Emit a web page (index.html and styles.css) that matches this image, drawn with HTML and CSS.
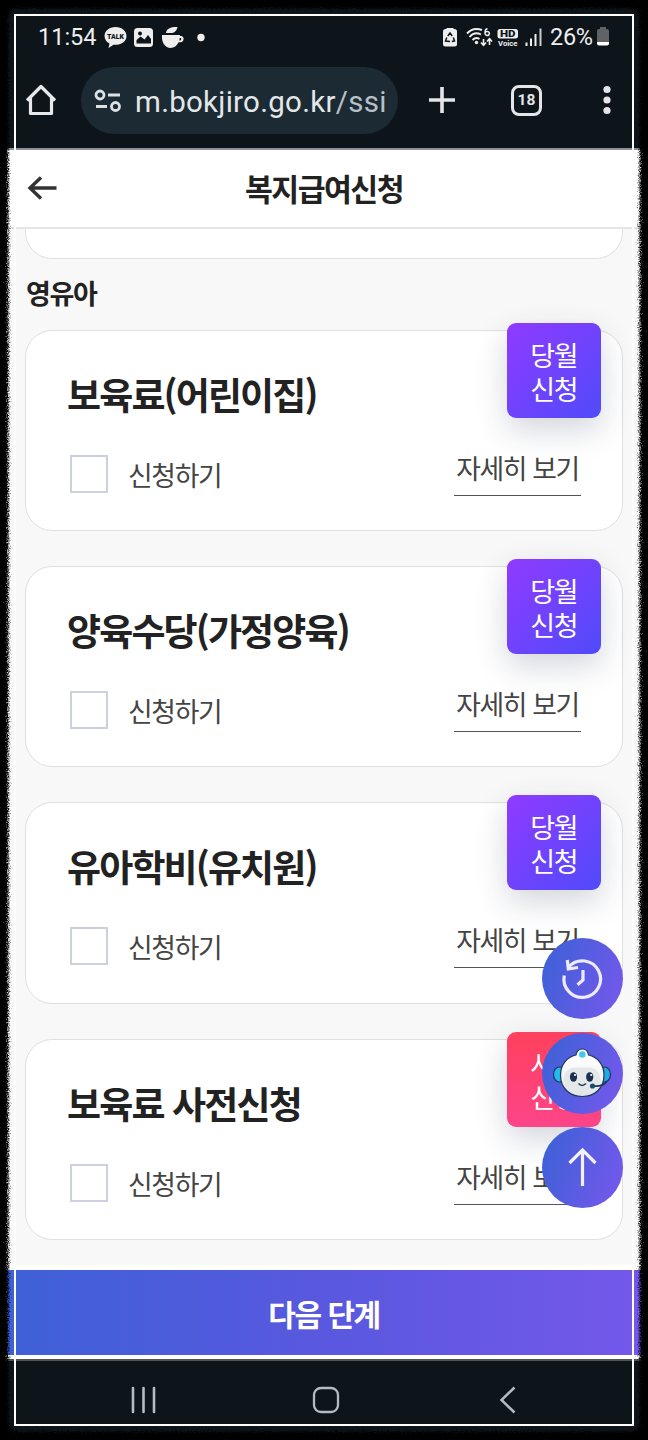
FILE: index.html
```html
<!DOCTYPE html>
<html lang="ko">
<head>
<meta charset="utf-8">
<title>복지급여신청</title>
<link rel="stylesheet" href="styles.css">
</head>
<body>
<div class="screen">
  <div class="status">
    <span class="clock">11:54</span>
    <svg class="status-left" width="104" height="26" viewBox="104 24 104 26">
      <path d="M115.500 27c-6.500 0-11 4-11 9 0 3.300 2 6 5 7.500l-1 4.500 5-3.200c7 .6 13-3 13-8.800 0-5-4.500-9-11-9z" fill="#eee"/>
      <text x="107" y="39" class="talk" textLength="17" lengthAdjust="spacingAndGlyphs">TALK</text>
      <rect x="134" y="28" width="19" height="19" rx="3.500" fill="#eee"/>
      <circle cx="140" cy="33.500" r="2" fill="#0d141a"/>
      <path d="M136.500 43.500v-3.500l4-3.500 4 3 3.500-4.500 3 4v4.500z" fill="#0d141a"/>
      <path d="M162 35h18v1c4.800-1.200 5.300 7-1.300 6.300-1.700 3.500-4.700 5.700-8 5.700-5.500 0-9.500-6-8.700-13zM166 33c.5-4 4-6.500 11.500-6-1 4-3 6-7 6z" fill="#eee"/>
      <path d="M179.700 38c2.300-.5 2 2.500-.3 2.500z" fill="#0d141a"/>
      <circle cx="201" cy="37.500" r="3.700" fill="#eee"/>
    </svg>
    <svg class="status-right" width="101" height="24" viewBox="442 26 101 24">
      <rect x="443" y="29" width="14" height="17.500" rx="2.500" fill="#eee"/><path d="M446.500 28h7v2h-7z" fill="#eee"/>
      <path d="M447.800 36l2.200-3 2.200 3M453.300 37.500l1.200 3.500-2.700.5M450 41.500l-4.500-.5 1.300-3.500" stroke="#0d141a" stroke-width="1.500" fill="none"/>
      <g fill="none" stroke="#eee" stroke-width="1.900"><path d="M467 33.500c4-4.500 9.500-5.500 15-3.500M469.500 37c3-3.500 7.500-4.500 11.500-2.500M472.500 40c2-2 4.500-2.500 7-1"/><path d="M483.500 39v6M481 42.500l2.500 2.800 2.500-2.800M489.500 45v-6M487 41.500l2.500-2.800 2.500 2.800" stroke-width="1.600"/><path d="M487.500 28.800c-3 0-3.500 6.700-.5 6.700 3.300 0 3-4.200 0-4-1 0-1.800.8-2 1.500" stroke-width="1.500"/></g>
      <circle cx="476.500" cy="42.500" r="1.700" fill="#eee"/>
      <rect x="497.500" y="29" width="20.500" height="9.500" rx="2.500" fill="#eee"/>
      <text x="500" y="37" class="hd" textLength="15.500" lengthAdjust="spacingAndGlyphs">HD</text>
      <text x="498" y="45.500" class="voice" textLength="19.500" lengthAdjust="spacingAndGlyphs">Voice</text>
      <path d="M526.500 42.500v3.500M531 38.500v7.500M535.500 34v12" stroke="#eee" stroke-width="2"/><path d="M540.500 28.500v17.500" stroke="#ccc" stroke-width="2"/>
    </svg>
    <span class="percent">26%</span>
    <svg class="battery" width="14" height="20" viewBox="0 0 14 20"><path d="M4 0h6v2h1q2 0 2 2v11H1V4q0-2 2-2h1z" fill="#606266"/><path d="M1 15h12v1.500q0 2-2 2H3q-2 0-2-2z" fill="#fff"/></svg>
  </div>
  <div class="browser">
    <svg class="home" width="34" height="34" viewBox="0 0 34 34"><path d="M3 17.500 17 3.500l14 14M6.500 15v15.500h21V15" fill="none" stroke="#e6e8ea" stroke-width="3.200" stroke-linejoin="round"/></svg>
    <div class="url">
      <svg width="28" height="24" viewBox="0 0 28 24" fill="none" stroke="#dce1e4" stroke-width="2.800"><circle cx="6" cy="6" r="4"/><path d="M14 6h12M2 17.500h11"/><circle cx="21.500" cy="17.500" r="4"/></svg>
      <span class="address">m.bokjiro.go.kr<span class="path">/ssi</span></span>
    </div>
    <svg class="plus" width="28" height="28" viewBox="0 0 28 28"><path d="M14 1v26M1 14h26" stroke="#e4e5e8" stroke-width="3.600"/></svg>
    <div class="tabs">18</div>
    <svg class="more" width="8" height="30" viewBox="0 0 8 30" fill="#e4e5e8"><circle cx="4" cy="4.500" r="3.600"/><circle cx="4" cy="15" r="3.600"/><circle cx="4" cy="25.500" r="3.600"/></svg>
  </div>
  <header class="header">
    <svg class="back" width="32" height="26" viewBox="0 0 32 26"><path d="M30.500 13H4M15 2.500 4 13l11 10.500" fill="none" stroke="#333" stroke-width="3.400"/></svg>
    <h1 class="page-title">복지급여신청</h1>
  </header>
  <main class="content">
    <div class="previous"></div>
    <h2 class="section">영유아</h2>
    <div class="cards">
      <article class="card"><h3 class="name">보육료(어린이집)</h3><div class="row"><span class="box"></span><span class="apply">신청하기</span><span class="detail">자세히 보기</span></div><div class="badge">당월<br>신청</div></article>
      <article class="card"><h3 class="name">양육수당(가정양육)</h3><div class="row"><span class="box"></span><span class="apply">신청하기</span><span class="detail">자세히 보기</span></div><div class="badge">당월<br>신청</div></article>
      <article class="card"><h3 class="name">유아학비(유치원)</h3><div class="row"><span class="box"></span><span class="apply">신청하기</span><span class="detail">자세히 보기</span></div><div class="badge">당월<br>신청</div></article>
      <article class="card"><h3 class="name">보육료 사전신청</h3><div class="row"><span class="box"></span><span class="apply">신청하기</span><span class="detail">자세히 보기</span></div><div class="badge pink">사전<br>신청</div></article>
    </div>
  </main>
  <button class="next">다음 단계</button>
  <nav class="nav">
    <svg width="28" height="28" viewBox="0 0 28 28"><path d="M3 2v24M13.500 2v24M24 2v24" stroke="#b5bbbf" stroke-width="2.600" stroke-linecap="round"/></svg>
    <svg width="28" height="28" viewBox="0 0 28 28"><rect x="2" y="2" width="24" height="24" rx="7" fill="none" stroke="#b5bbbf" stroke-width="2.300"/></svg>
    <svg width="28" height="28" viewBox="0 0 28 28"><path d="M20.500 1.500 7.500 14l13 12.500" fill="none" stroke="#b5bbbf" stroke-width="2.500"/></svg>
  </nav>
  <div class="floating">
    <div class="fab"><svg width="81" height="81" viewBox="0 0 81 81" fill="none" stroke="#eeeaff" stroke-width="3.200"><path d="M27 28.500A18.300 18.300 0 1 1 22.300 37.500M25.300 22l1 9 9.700-1.500M41 32v10l-5.500 4.700"/></svg></div>
    <div class="fab"><svg width="81" height="81" viewBox="0 0 81 81">
      <defs><linearGradient id="head" x2="0" y2="1"><stop offset=".3" stop-color="#fcfcfc"/><stop offset="1" stop-color="#dfe4e6"/></linearGradient></defs>
      <ellipse cx="17.500" cy="41.500" rx="6" ry="7.500" fill="#24b9ee" stroke="#203758" stroke-width="1.200"/><ellipse cx="62.500" cy="41.500" rx="6" ry="7.500" fill="#22a6e4" stroke="#203758" stroke-width="1.200"/>
      <path d="M34 22q1-6 6.300-6t6.200 6c9 2 15.500 9.500 15.500 20 0 14-10 21.500-21.700 21.500S18.500 56 18.500 42C18.500 31.500 25 24 34 22z" fill="url(#head)" stroke="#203758" stroke-width="1.200"/>
      <rect x="22" y="34.500" width="36" height="23" rx="11" fill="#e5e8e9"/><circle cx="40.300" cy="21.500" r="3.200" fill="#42c7f2"/>
      <ellipse cx="31.500" cy="44" rx="3.600" ry="4.800" fill="#1d304f"/><ellipse cx="47.700" cy="44" rx="3.600" ry="4.800" fill="#1d304f"/><circle cx="33" cy="42" r="1.100" fill="#fff"/><circle cx="49.200" cy="42" r="1.100" fill="#fff"/>
      <path d="M36.500 50.500q3.500 3.800 7.500 0" fill="none" stroke="#203758" stroke-width="1.500"/><path d="M65 48q-4 6-14 5" fill="none" stroke="#203758" stroke-width="1.800"/><circle cx="50.500" cy="53" r="2.600" fill="#17506f"/></svg></div>
    <div class="fab"><svg width="81" height="81" viewBox="0 0 81 81"><path d="M40.500 59V23M27.500 36l13-13 13 13" fill="none" stroke="#f3f1ff" stroke-width="3.200"/></svg></div>
  </div>
  <svg class="frame" width="648" height="1440" viewBox="0 0 648 1440">
    <defs><filter id="rough" filterUnits="userSpaceOnUse" x="-20" y="-20" width="688" height="1480" color-interpolation-filters="sRGB">
      <feGaussianBlur in="SourceAlpha" stdDeviation="3" result="soft"/>
      <feTurbulence type="fractalNoise" baseFrequency=".8" numOctaves="2" seed="4"/>
      <feColorMatrix values="0 0 0 0 0  0 0 0 0 0  0 0 0 0 0  1 0 0 0 0" result="noise"/>
      <feComposite in="soft" in2="noise" operator="arithmetic" k1="0" k2="2.400" k3="2" k4="-1.850"/>
      <feColorMatrix values="0 0 0 0 0  0 0 0 0 0  0 0 0 0 0  0 0 0 1 0"/>
    </filter></defs>
    <path filter="url(#rough)" fill-rule="evenodd" d="M-20-20h688v1480H-20zM15 9h618q6 0 6 6v1410q0 6-6 6H15q-6 0-6-6V15q0-6 6-6z"/>
    <rect x="15" y="15" width="618" height="1410" fill="none" stroke="#fff" stroke-width="2"/>
  </svg>
</div>
</body>
</html>
```
FILE: styles.css
```css
* { box-sizing: border-box; }
body { margin: 0; background: #000; font-family: "Noto Sans CJK KR", sans-serif; }
svg { display: block; flex: none; }
h1, h2, h3 { margin: 0; }
.screen { position: relative; width: 648px; height: 1440px; display: flex; flex-direction: column; overflow: hidden; background: #0d141a; }
.status { height: 61px; flex: none; display: flex; align-items: flex-start; padding: 24px 38px 0 38px; color: #eee; font: 23.500px/26px Roboto, sans-serif; }
.clock { width: 66px; white-space: nowrap; }
.status-right { margin: 2px 7px 0 auto; }
.percent { width: 46px; letter-spacing: -.3px; }
.battery { margin-top: 3px; }
.talk { font: 900 7.500px Roboto, sans-serif; fill: #0d141a; }
.hd { font: 900 9px Roboto, sans-serif; fill: #0d141a; }
.voice { font: 700 7.500px Roboto, sans-serif; fill: #eee; }
.browser { height: 89px; flex: none; display: flex; align-items: flex-start; padding: 6px 37px 0 24px; border-bottom: 2px solid #8b9394; }
.home { margin-top: 16px; }
.url { width: 317px; height: 67px; margin-left: 23px; border-radius: 34px; background: #1c2a34; display: flex; align-items: center; padding-left: 13px; gap: 13px; }
.address { padding-top: 2px; font: 29.500px/40px Roboto, sans-serif; letter-spacing: .27px; color: #e3e7e9; white-space: nowrap; }
.path { color: #b7c0c6; }
.plus { margin: 19px 0 0 30px; }
.tabs { width: 31px; height: 31px; margin: 18px 0 0 55px; border: 3.500px solid #e4e5e8; border-radius: 8px; color: #e4e5e8; text-align: center; font: 700 15.500px/25px Roboto, sans-serif; }
.more { margin: 18px 0 0 auto; }
.header { height: 79px; flex: none; display: grid; grid-template-columns: 32px 1fr 32px; align-items: center; padding: 0 26px; background: #fff; border-bottom: 2px solid #e5e5e5; }
.page-title { margin-top: -2px; text-align: center; font-size: 30.300px; line-height: 40px; letter-spacing: -.05em; color: #222; }
.back { margin-top: -2px; }
.content { height: 1041px; flex: none; padding: 0 25px; background: #f8f8f8; border-bottom: 5px solid #fff; }
.previous { height: 30px; border: 1.500px solid #e0e0e0; border-top: 0; border-radius: 0 0 27px 27px; background: #fff; }
.section { height: 71px; padding: 14px 0 0 1px; font-size: 27px; line-height: 40px; letter-spacing: -.05em; color: #222; }
.cards { display: flex; flex-direction: column; gap: 35px; }
.card { position: relative; height: 201.200px; padding: 36px 41px 0 41px; border: 1.500px solid #e0e0e0; border-radius: 27px; background: #fff; }
.name { height: 56px; font-size: 37px; line-height: 54px; letter-spacing: -.05em; color: #222; white-space: nowrap; }
.row { display: flex; align-items: flex-start; padding-top: 22px; padding-left: 3px; }
.box { width: 38px; height: 38px; margin-top: 10px; border: 2px solid #cdd0e0; background: #fff; }
.apply { margin: 10px 0 0 20px; font-size: 26.800px; line-height: 40px; letter-spacing: -.05em; color: #444; }
.detail { width: 127px; height: 51px; margin-left: auto; border-bottom: 1.500px solid #555; font-size: 26.800px; line-height: 46px; letter-spacing: -.05em; text-align: center; color: #444; white-space: nowrap; }
.badge { position: absolute; top: -8px; right: 21px; width: 94.500px; height: 95px; padding-top: 15px; border-radius: 9px; background: linear-gradient(135deg, #903aff, #504bfa); box-shadow: 0 12px 32px rgba(40, 50, 90, .2); color: #fff; text-align: center; font-size: 27px; line-height: 33.500px; letter-spacing: -.05em; }
.badge.pink { background: linear-gradient(180deg, #ff405d, #fc4589); }
.next { height: 85px; flex: none; border: 0; padding: 0; background: linear-gradient(90deg, #3d61d7, #5958df 50%, #7558eb); color: #fff; font-family: inherit; font-weight: 700; font-size: 30px; line-height: 42px; letter-spacing: -.05em; }
.nav { flex: 1; display: flex; justify-content: center; align-items: flex-start; gap: 154px; padding: 27px 0 0 4px; border-top: 4px solid #fff; background: linear-gradient(#4c5456 2px, #0d141a 2px); }
.floating { position: absolute; left: 542px; top: 938px; display: grid; gap: 13.500px; }
.fab { width: 81px; height: 81px; border-radius: 50%; background: linear-gradient(110deg, #3d61d7 5%, #7558eb 95%); }
.frame { position: absolute; inset: 0; }
```
